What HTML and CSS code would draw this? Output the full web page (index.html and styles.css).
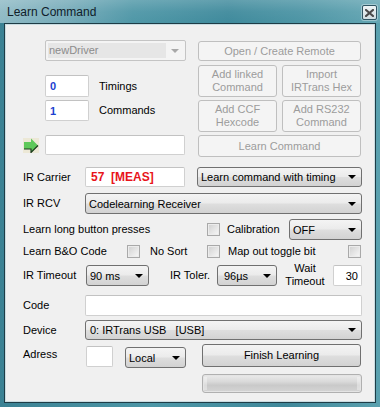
FILE: index.html
```html
<!DOCTYPE html>
<html>
<head>
<meta charset="utf-8">
<link rel="stylesheet" href="styles.css">
</head>
<body>
<div class="window">
  <div class="titlebar">
    <span class="title">Learn Command</span>
    <span class="close"><svg width="9" height="8" viewBox="0 0 9 8"><path d="M1 1 L8 7 M8 1 L1 7" stroke="#4a4a4a" stroke-width="2.2" stroke-linecap="square"/></svg></span>
  </div>
  <div class="client">
    <div class="sec-a">
      <div class="col-left">
        <div class="combo disabled c-driver"><span class="sel">newDriver</span><span class="arrow"></span></div>
        <div class="row r-timings"><div class="tb num tb-count">0</div><span class="lbl side">Timings</span></div>
        <div class="row r-commands"><div class="tb num tb-count">1</div><span class="lbl side">Commands</span></div>
        <div class="row r-arrow">
          <svg class="go" width="16" height="15" viewBox="0 0 16 15">
            <rect x="0" y="0" width="16" height="15" fill="#ece8d6"/>
            <polygon points="1,4 8,4 8,0.5 15,7.5 8,14.5 8,11 1,11" fill="#5ec85a"/>
            <polyline points="1,11 8,11 8,14.5 15,7.5" fill="none" stroke="#1d3a1d" stroke-width="1.2"/>
          </svg>
          <div class="tb tb-name"></div>
        </div>
      </div>
      <div class="col-right">
        <div class="btn dis b-open">Open / Create Remote</div>
        <div class="row r-pair1">
          <div class="btn dis b-half">Add linked<br>Command</div>
          <div class="btn dis b-half">Import<br>IRTrans Hex</div>
        </div>
        <div class="row r-pair2">
          <div class="btn dis b-half">Add CCF<br>Hexcode</div>
          <div class="btn dis b-half">Add RS232<br>Command</div>
        </div>
        <div class="btn dis b-learn">Learn Command</div>
      </div>
    </div>

    <div class="row r-carrier">
      <span class="lbl l-main">IR Carrier</span>
      <div class="tb tb-carrier">57  [MEAS]</div>
      <div class="combo c-mode"><span class="val">Learn command with timing</span><span class="arrow"></span></div>
    </div>

    <div class="row r-rcv">
      <span class="lbl l-main">IR RCV</span>
      <div class="combo c-wide"><span class="val">Codelearning Receiver</span><span class="arrow"></span></div>
    </div>

    <div class="row r-long">
      <span class="lbl l-long">Learn long button presses</span>
      <span class="chk"></span>
      <span class="lbl l-calib">Calibration</span>
      <div class="combo c-off"><span class="val">OFF</span><span class="arrow"></span></div>
    </div>

    <div class="row r-bo">
      <span class="lbl l-bo">Learn B&amp;O Code</span>
      <span class="chk"></span>
      <span class="lbl l-nosort">No Sort</span>
      <span class="chk"></span>
      <span class="lbl l-map">Map out toggle bit</span>
      <span class="chk"></span>
    </div>

    <div class="row r-timeout">
      <span class="lbl l-timeout">IR Timeout</span>
      <div class="combo c-90"><span class="val">90 ms</span><span class="arrow"></span></div>
      <span class="lbl l-toler">IR Toler.</span>
      <div class="combo c-96"><span class="val">96µs</span><span class="arrow"></span></div>
      <span class="lbl l-wait">Wait<br>Timeout</span>
      <div class="tb tb-wait">30</div>
    </div>

    <div class="row r-code">
      <span class="lbl l-main">Code</span>
      <div class="tb tb-wide"></div>
    </div>

    <div class="row r-device">
      <span class="lbl l-main">Device</span>
      <div class="combo c-wide c-dev"><span class="val">0: IRTrans USB   [USB]</span><span class="arrow"></span></div>
    </div>

    <div class="row r-adress">
      <span class="lbl l-adress">Adress</span>
      <div class="tb tb-adr"></div>
      <div class="combo c-local"><span class="val">Local</span><span class="arrow"></span></div>
      <div class="btn b-finish">Finish Learning</div>
    </div>

    <div class="progress"><span class="pg-l"></span><span class="pg-r"></span></div>
  </div>
</div>
</body>
</html>
```

FILE: styles.css
```css
* { box-sizing: border-box; }
html, body { margin: 0; padding: 0; background: #4a93a3; }
body { font-family: "Liberation Sans", Arial, sans-serif; font-size: 11px; color: #000; }

.window {
  width: 380px;
  height: 407px;
  padding: 0 4px 4px 4px;
  background: linear-gradient(to right, #3b8294 0%, #4c97a7 40%, #3f889a 75%, #5aa1af 100%);
  display: flex;
  flex-direction: column;
  overflow: hidden;
}

.titlebar {
  height: 23px;
  flex: none;
  display: flex;
  align-items: flex-start;
  margin: 0 -4px;
  padding: 0 3px 0 7px;
  background:
    linear-gradient(to bottom, rgba(255,255,255,0.18) 0%, rgba(255,255,255,0.05) 50%, rgba(0,0,0,0) 100%),
    linear-gradient(to right, #8fbac5 0%, #74aab8 18%, #4f97a7 35%, #3f8a9c 60%, #4d95a5 80%, #64a6b3 100%);
}
.title {
  font-size: 12px;
  line-height: 14px;
  padding-top: 5px;
  color: #10202a;
}
.close {
  margin-left: auto;
  margin-top: 5px;
  width: 15px;
  height: 15px;
  border: 1px solid #2f5563;
  border-radius: 2px;
  background: linear-gradient(#eef4f5, #cfdde1);
  box-shadow: 0 0 0 1px rgba(255,255,255,0.35);
  display: flex;
  align-items: center;
  justify-content: center;
}

.client {
  flex: 1;
  border: 1px solid #1e3c46;
  box-shadow: inset 0 0 0 1px #c9dde2;
  background: #f0f0f0;
  padding: 16px 0 0 18px;
}

.row { display: flex; align-items: center; }
.lbl { white-space: nowrap; line-height: 13px; }

/* generic controls */
.tb {
  background: #fff;
  border: 1px solid #d0d0d0;
  border-top-color: #c2c2c2;
  border-radius: 2px;
  height: 100%;
  display: flex;
  align-items: center;
  padding-left: 4px;
  white-space: pre;
}
.num { color: #1d3fd0; font-weight: bold; font-size: 11px; }

.combo {
  height: 100%;
  border: 1px solid #707070;
  border-radius: 3px;
  background: linear-gradient(#f4f4f4 0%, #ebebeb 48%, #dedede 52%, #d2d2d2 100%);
  display: flex;
  align-items: center;
  padding-left: 3px;
  white-space: pre;
}
.arrow {
  margin-left: auto;
  margin-right: 5px;
  width: 0;
  height: 0;
  border-left: 4px solid transparent;
  border-right: 4px solid transparent;
  border-top: 4px solid #000;
}
.combo.disabled {
  border-color: #c4c4c4;
  border-radius: 2px;
  background: #f4f4f4;
  color: #8c8c8c;
  padding-left: 2px;
}
.combo.disabled .sel {
  background: #e6e6e6;
  width: 118px;
  height: 15px;
  line-height: 15px;
  padding-left: 1px;
}
.combo.disabled .arrow { border-top-color: #a8a8a8; margin-right: 6px; }

.btn {
  border: 1px solid #707070;
  border-radius: 3px;
  background: linear-gradient(#f4f4f4 0%, #ebebeb 48%, #dedede 52%, #d2d2d2 100%);
  display: flex;
  align-items: center;
  justify-content: center;
  text-align: center;
  line-height: 13px;
}
.btn.dis {
  border-color: #bfbfbf;
  background: #f4f4f4;
  color: #9c9c9c;
}

.chk {
  width: 13px;
  height: 13px;
  flex: none;
  border: 1px solid #a9a9a9;
  background: linear-gradient(135deg, #cfcfcf 0%, #e6e6e6 55%, #f8f8f8 100%);
  box-shadow: inset 0 0 0 1px #ececec;
}

/* section A */
.sec-a { display: flex; align-items: flex-start; height: 117px; }
.col-left { width: 163px; display: flex; flex-direction: column; }
.col-right { width: 163px; margin-left: 12px; display: flex; flex-direction: column; }

.c-driver { margin-left: 22px; width: 141px; height: 21px; }
.r-timings { margin-top: 14px; height: 22px; }
.r-commands { margin-top: 3px; height: 21px; }
.tb-count { width: 44px; margin-left: 22px; }
.side { margin-left: 10px; }
.r-arrow { margin-top: 14px; height: 20px; }
.go { flex: none; margin-top: 1px; }
.tb-name { width: 140px; margin-left: 6px; }

.b-open { height: 20px; margin-top: 1px; }
.r-pair1 { margin-top: 4px; height: 32px; gap: 5px; }
.r-pair2 { margin-top: 3px; height: 32px; gap: 5px; }
.b-half { width: 79px; height: 100%; }
.b-learn { margin-top: 3px; height: 22px; }

/* rows */
.l-main { width: 62px; }
.r-carrier { margin-top: 10px; height: 20px; }
.tb-carrier { width: 100px; color: #e8141a; font-weight: bold; font-size: 12px; padding-left: 5px; }
.c-mode { width: 165px; margin-left: 12px; }

.r-rcv { margin-top: 6px; height: 21px; }
.c-wide { width: 277px; }

.r-long { margin-top: 5px; height: 21px; }
.l-long { width: 184px; }
.l-calib { margin-left: 7px; width: 62px; }
.c-off { width: 73px; }

.r-bo { margin-top: 5px; height: 13px; }
.l-bo { width: 104px; }
.l-nosort { margin-left: 10px; width: 57px; }
.l-map { margin-left: 8px; width: 120px; }

.r-timeout { margin-top: 7px; height: 21px; }
.l-timeout { width: 63px; }
.c-90 { width: 63px; }
.l-toler { margin-left: 21px; width: 47px; }
.c-96 { width: 60px; padding-left: 6px; }
.l-wait { width: 56px; text-align: center; line-height: 13px; white-space: normal; margin-top: -1px; }
.tb-wait { width: 29px; justify-content: flex-end; padding-right: 3px; padding-left: 0; }

.r-code { margin-top: 9px; height: 21px; }
.tb-wide { width: 277px; }

.r-device { margin-top: 4px; height: 20px; }
.c-dev { padding-left: 4px; }

.r-adress { margin-top: 4px; height: 24px; align-items: flex-start; }
.l-adress { width: 63px; margin-top: 4px; }
.tb-adr { width: 27px; height: 21px; margin-top: 2px; }
.c-local { width: 61px; height: 21px; margin-top: 3px; margin-left: 12px; }
.b-finish { width: 159px; height: 23px; margin-left: 16px; }

.progress {
  margin-top: 6px;
  margin-left: 179px;
  width: 160px;
  height: 19px;
  border: 1px solid #b0b0b0;
  border-radius: 3px;
  background: linear-gradient(#eaeaea 0%, #d9d9d9 40%, #c9c9c9 60%, #d4d4d4 100%);
  box-shadow: inset 0 0 0 1px #e4e4e4;
  display: flex;
  justify-content: space-between;
  padding: 2px 1px;
}
.pg-l, .pg-r { width: 3px; height: 100%; background: rgba(255,255,255,0.35); }
```
